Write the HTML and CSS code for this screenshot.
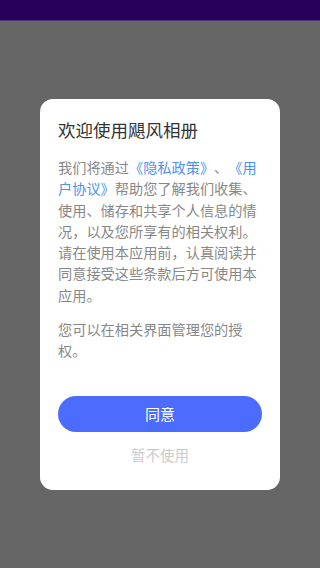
FILE: index.html
```html
<!DOCTYPE html>
<html lang="zh-CN">
<head>
  <meta charset="UTF-8">
  <title>欢迎使用飓风相册</title>
  <link rel="stylesheet" href="styles.css">
</head>
<body>
  <div class="status-bar"></div>
  <div class="overlay">
    <div class="dialog">
      <div class="dialog-title">欢迎使用飓风相册</div>
      <p class="dialog-text">我们将通过<a href="#" class="link">《隐私政策》</a>、<a href="#" class="link">《用户协议》</a>帮助您了解我们收集、使用、储存和共享个人信息的情况，以及您所享有的相关权利。请在使用本应用前，认真阅读并同意接受这些条款后方可使用本应用。</p>
      <p class="dialog-text second">您可以在相关界面管理您的授权。</p>
      <button class="agree-btn">同意</button>
      <div class="skip-btn">暂不使用</div>
    </div>
  </div>
</body>
</html>
```

FILE: styles.css
```css
html, body {
  height: 100%;
}
body {
  margin: 0;
  background: #666;
  font-family: "Noto Sans CJK SC", "Noto Sans", sans-serif;
  display: flex;
  flex-direction: column;
}
.status-bar {
  height: 21px;
  background: #26005a;
  border-bottom: 1px solid #4b3a6e;
  box-sizing: border-box;
  flex-shrink: 0;
}
.overlay {
  flex: 1;
  display: flex;
  align-items: center;
  justify-content: center;
}
.dialog {
  width: 240px;
  height: 391px;
  box-sizing: border-box;
  background: #fff;
  border-radius: 13px;
  padding: 20px 18px 0;
}
.dialog-title {
  font-size: 17.5px;
  line-height: 22px;
  color: #333;
}
.dialog-text {
  margin: 16px 0 0;
  font-size: 14.2px;
  line-height: 21.3px;
  color: #888;
  text-spacing-trim: space-all;
  font-feature-settings: "chws" 0, "halt" 0;
}
.dialog-text.second {
  margin-top: 13px;
}
.link {
  color: #4f92ee;
  text-decoration: none;
}
.agree-btn {
  display: block;
  width: 100%;
  height: 36px;
  margin-top: 34px;
  border: none;
  border-radius: 18px;
  background: #4b6cfc;
  color: #fff;
  font-family: inherit;
  font-size: 15px;
}
.skip-btn {
  margin-top: 13px;
  text-align: center;
  font-size: 14.5px;
  line-height: 20px;
  color: #ccc;
}
```
